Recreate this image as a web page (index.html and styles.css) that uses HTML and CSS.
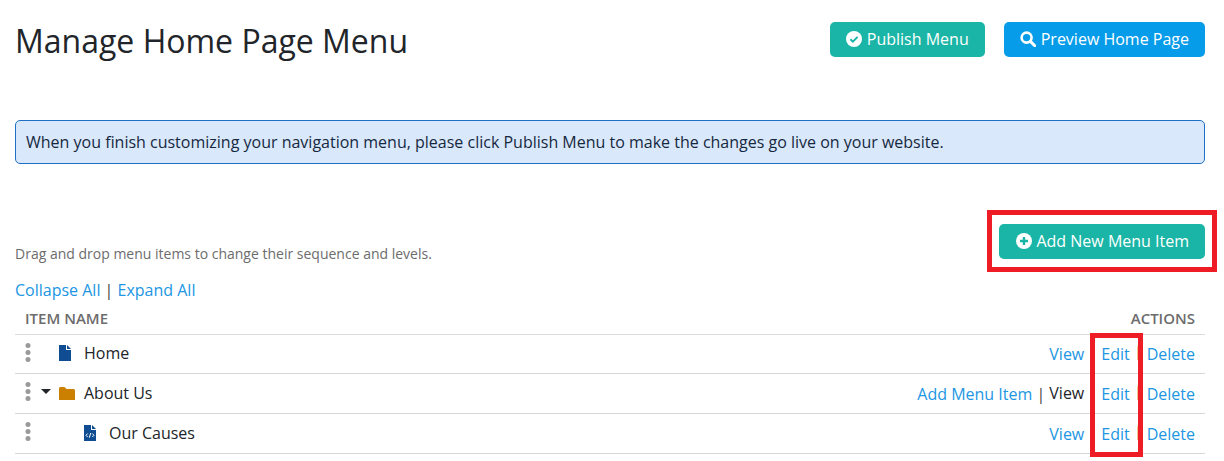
FILE: index.html
```html
<!DOCTYPE html>
<html lang="en">
<head>
<meta charset="utf-8">
<title>Manage Home Page Menu</title>
<link rel="stylesheet" href="styles.css">
</head>
<body>
<main class="page">
  <header class="top">
    <h1>Manage Home Page Menu</h1>
    <div class="top-actions">
      <a class="btn teal"><svg class="ico" viewBox="0 0 16 16"><circle cx="8" cy="8" r="8" fill="#fff"/><path d="M4.4 8.2l2.5 2.5 4.7-4.8" fill="none" stroke="#1ab5a6" stroke-width="2"/></svg><span>Publish Menu</span></a>
      <a class="btn blue"><svg class="ico" viewBox="0 0 16 16"><circle cx="6.6" cy="6.6" r="5" fill="none" stroke="#fff" stroke-width="2.6"/><path d="M10.4 10.4l4.4 4.4" stroke="#fff" stroke-width="3" stroke-linecap="round"/></svg><span>Preview Home Page</span></a>
    </div>
  </header>

  <div class="alert">When you finish customizing your navigation menu, please click Publish Menu to make the changes go live on your website.</div>

  <div class="hint-row">
    <p class="hint">Drag and drop menu items to change their sequence and levels.</p>
    <a class="btn teal add"><svg class="ico" viewBox="0 0 16 16"><circle cx="8" cy="8" r="8" fill="#fff"/><path d="M8 4v8M4 8h8" stroke="#1ab5a6" stroke-width="2.4"/></svg><span>Add New Menu Item</span></a>
  </div>

  <div class="toggle"><a>Collapse All</a> | <a>Expand All</a></div>

  <div class="thead"><span>ITEM NAME</span><span>ACTIONS</span></div>

  <div class="row first">
    <svg class="grip" viewBox="0 0 6 19"><circle cx="3" cy="2.5" r="2.5"/><circle cx="3" cy="9.5" r="2.5"/><circle cx="3" cy="16.5" r="2.5"/></svg>
    <div class="name l1">
      <svg class="file" viewBox="0 0 12 16"><path d="M0 0h7v5h5v11H0z" fill="#0f4c92"/><path d="M8 0l4 4H8z" fill="#0f4c92"/></svg>
      <span>Home</span>
    </div>
    <div class="acts"><a>View</a><i class="sep hidden">|</i><a>Edit</a><i class="sep pale"></i><a>Delete</a></div>
  </div>

  <div class="row">
    <svg class="grip" viewBox="0 0 6 19"><circle cx="3" cy="2.5" r="2.5"/><circle cx="3" cy="9.5" r="2.5"/><circle cx="3" cy="16.5" r="2.5"/></svg>
    <div class="name l0">
      <svg class="caret" viewBox="0 0 10 5"><path d="M0 0h10L5 5z" fill="#212529"/></svg>
      <svg class="folder" viewBox="0 0 16 13"><path d="M0 1.500C0 .7.7 0 1.500 0h4l2 2h7c.8 0 1.500.7 1.500 1.500V13H0z" fill="#cb8002"/></svg>
      <span>About Us</span>
    </div>
    <div class="acts"><a>Add Menu Item</a><i class="sep dark">|</i><b class="plain">View</b><i class="sep hidden">|</i><a>Edit</a><i class="sep pale"></i><a>Delete</a></div>
  </div>

  <div class="row">
    <svg class="grip" viewBox="0 0 6 19"><circle cx="3" cy="2.5" r="2.5"/><circle cx="3" cy="9.5" r="2.5"/><circle cx="3" cy="16.5" r="2.5"/></svg>
    <div class="name l2">
      <svg class="file" viewBox="0 0 12 16"><path d="M0 0h7v5h5v11H0z" fill="#0f4c92"/><path d="M8 0l4 4H8z" fill="#0f4c92"/><path d="M3.700 8.500L2 10.300l1.700 1.700M8.300 8.500l1.700 1.800L8.300 12M6.700 8L5.300 12.700" fill="none" stroke="#fff" stroke-width="1"/></svg>
      <span>Our Causes</span>
    </div>
    <div class="acts"><a>View</a><i class="sep hidden">|</i><a>Edit</a><i class="sep pale"></i><a>Delete</a></div>
  </div>
</main>
<div class="mark mark-add"></div>
<div class="mark mark-edit"></div>
</body>
</html>
```
FILE: styles.css
```css
* { box-sizing: border-box; }
html, body { margin: 0; padding: 0; background: #fff; }
body { font-family: "Open Sans", sans-serif; font-size: 16px; color: #212529; height: 461px; overflow: hidden; }
a { color: #2196e3; text-decoration: none; }
.page { padding: 22px 19px 0 15px; }

.top { display: flex; justify-content: space-between; align-items: flex-start; height: 98px; }
h1 { margin: -3px 0 0; font-size: 32px; line-height: 44px; font-weight: 400; color: #212529; }
.top-actions { display: flex; gap: 19px; }

.btn { display: inline-flex; align-items: center; height: 35px; padding: 0 16px; border-radius: 5px; color: #fff; font-size: 16px; white-space: nowrap; }
.btn span { margin-top: -2px; }
.btn .ico { margin-top: -1px; }
.teal { background: #1ab5a6; }
.blue { background: #069ce9; }
.ico { width: 16px; height: 16px; margin-right: 5px; flex: none; }
.add { padding-left: 17px; }
.add .ico { margin-right: 4px; }

.alert { height: 44px; border: 1px solid #1f6fc4; border-radius: 5px; background: #d9e8fb; padding: 0 10px; line-height: 42px; color: #16283f; }

.hint-row { display: flex; justify-content: space-between; align-items: flex-end; margin-top: 60px; height: 35px; }
.hint { margin: 0; font-size: 14px; line-height: 20px; color: #6c6c6c; position: relative; top: 5px; }

.toggle { margin-top: 20px; height: 22px; line-height: 22px; color: #444; }
.thead { display: flex; justify-content: space-between; height: 34px; padding: 7px 10px 0; line-height: 20px; font-size: 15px; font-weight: 600; color: #6c6c6c; border-bottom: 1px solid #dcdcdc; }

.row { display: flex; align-items: center; height: 40px; border-bottom: 1px solid #d8d8d8; padding-right: 10px; }
.row.first { height: 39px; }
.grip { width: 6px; height: 19px; margin: -4px 0 0 10px; fill: #9a9a9a; flex: none; }
.first .grip { margin-top: -3px; }
.name { display: flex; align-items: center; flex: 1; color: #212529; }
.name span { line-height: 22px; margin-top: -2px; }
.l1 { padding-left: 27px; }
.l0 { padding-left: 10px; }
.l2 { padding-left: 52px; }
.file { width: 12px; height: 16px; margin: -2px 13px 0 1px; flex: none; }
.caret { width: 10px; height: 5px; margin: -5px 8px 0 0; flex: none; }
.folder { width: 16px; height: 13px; margin-right: 9px; flex: none; }
.acts { display: flex; align-items: center; line-height: 22px; margin-top: 1px; }
.first .acts { margin-top: 0; }
.sep { font-style: normal; display: inline-block; width: 17px; text-align: center; }
.sep.dark { color: #444; }
.sep.hidden { visibility: hidden; }
.sep.pale { position: relative; }
.sep.pale::after { content: ""; position: absolute; left: 7px; top: -8px; width: 1px; height: 14px; background: #f3c88e; }
.plain { font-weight: 400; color: #212529; margin-top: -2px; }

.mark { position: absolute; border: 5px solid #ee1c25; }
.mark-add { left: 987px; top: 210px; width: 230px; height: 62px; }
.mark-edit { left: 1090px; top: 333px; width: 53px; height: 124px; }
```
